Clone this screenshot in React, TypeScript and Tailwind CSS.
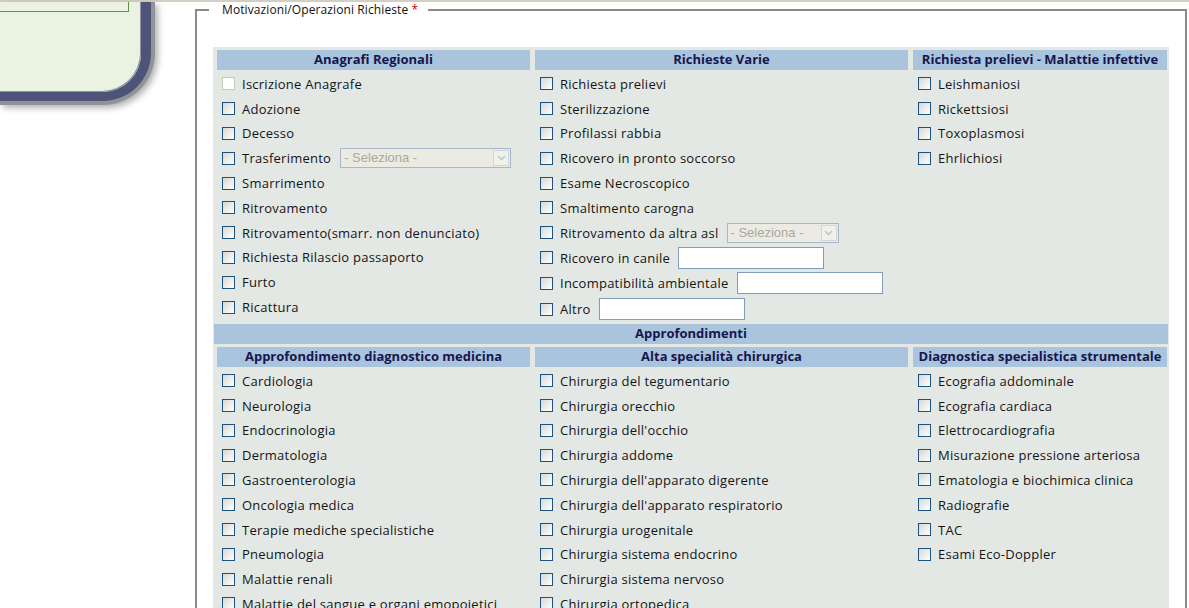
import React from "react";

type Item = { label: string; disabled?: boolean; extra?: "select171" | "select112" | "input" };

const col1: Item[] = [
  { label: "Iscrizione Anagrafe", disabled: true },
  { label: "Adozione" },
  { label: "Decesso" },
  { label: "Trasferimento", extra: "select171" },
  { label: "Smarrimento" },
  { label: "Ritrovamento" },
  { label: "Ritrovamento(smarr. non denunciato)" },
  { label: "Richiesta Rilascio passaporto" },
  { label: "Furto" },
  { label: "Ricattura" },
];

const col2: Item[] = [
  { label: "Richiesta prelievi" },
  { label: "Sterilizzazione" },
  { label: "Profilassi rabbia" },
  { label: "Ricovero in pronto soccorso" },
  { label: "Esame Necroscopico" },
  { label: "Smaltimento carogna" },
  { label: "Ritrovamento da altra asl", extra: "select112" },
  { label: "Ricovero in canile", extra: "input" },
  { label: "Incompatibilità ambientale", extra: "input" },
  { label: "Altro", extra: "input" },
];

const col3: Item[] = [
  { label: "Leishmaniosi" },
  { label: "Rickettsiosi" },
  { label: "Toxoplasmosi" },
  { label: "Ehrlichiosi" },
];

const col4: Item[] = [
  "Cardiologia",
  "Neurologia",
  "Endocrinologia",
  "Dermatologia",
  "Gastroenterologia",
  "Oncologia medica",
  "Terapie mediche specialistiche",
  "Pneumologia",
  "Malattie renali",
  "Malattie del sangue e organi emopoietici",
].map((label) => ({ label }));

const col5: Item[] = [
  "Chirurgia del tegumentario",
  "Chirurgia orecchio",
  "Chirurgia dell'occhio",
  "Chirurgia addome",
  "Chirurgia dell'apparato digerente",
  "Chirurgia dell'apparato respiratorio",
  "Chirurgia urogenitale",
  "Chirurgia sistema endocrino",
  "Chirurgia sistema nervoso",
  "Chirurgia ortopedica",
].map((label) => ({ label }));

const col6: Item[] = [
  "Ecografia addominale",
  "Ecografia cardiaca",
  "Elettrocardiografia",
  "Misurazione pressione arteriosa",
  "Ematologia e biochimica clinica",
  "Radiografie",
  "TAC",
  "Esami Eco-Doppler",
].map((label) => ({ label }));

function CheckBox({ disabled }: { disabled?: boolean }) {
  return disabled ? (
    <span className="block w-[13px] h-[13px] shrink-0 border border-[#cac8bb] bg-white" />
  ) : (
    <span className="block w-[13px] h-[13px] shrink-0 border border-[#1c5180] bg-linear-to-br from-[#d8d8d2] to-white" />
  );
}

function FakeSelect({ wide }: { wide: boolean }) {
  return (
    <span
      className={
        wide
          ? "ml-[9px] flex items-center w-[171px] h-[20px] border border-[#a9b8c8] bg-[#ebebe4]"
          : "ml-[8px] flex items-center w-[112px] h-[20px] border border-[#a9b8c8] bg-[#ebebe4]"
      }
    >
      <span className="flex-1 pl-[3px] text-[13px] leading-[18px] tracking-normal text-[#aca899] font-['Liberation_Sans',Arial,sans-serif]">
        - Seleziona -
      </span>
      <span className="mr-[1px] flex items-center justify-center w-[16px] h-[16px] border border-[#d2d6dc] bg-[#f1f1ec]">
        <svg width="9" height="6" viewBox="0 0 9 6">
          <path d="M1 1 L4.5 4.5 L8 1" fill="none" stroke="#c3c6cc" strokeWidth="1.6" />
        </svg>
      </span>
    </span>
  );
}

function Row({ item }: { item: Item }) {
  const tall = item.extra === "input";
  return (
    <div className={tall ? "flex items-center h-[25.6px] pl-[5px]" : "flex items-center h-[24.8px] pl-[5px]"}>
      <CheckBox disabled={item.disabled} />
      <span className="ml-[7px] text-[13px] leading-[16px] tracking-[0.25px] text-[#141414] whitespace-nowrap">
        {item.label}
      </span>
      {item.extra === "select171" && <FakeSelect wide={true} />}
      {item.extra === "select112" && <FakeSelect wide={false} />}
      {item.extra === "input" && (
        <span className="ml-[8px] block w-[146px] h-[22px] border border-[#7f9db9] bg-white" />
      )}
    </div>
  );
}

function Header({ children }: { children: React.ReactNode }) {
  return (
    <div className="h-[20px] bg-[#a9c4dc] flex items-center justify-center text-[13px] font-bold text-[#16164f] whitespace-nowrap">
      {children}
    </div>
  );
}

function Column({ title, items }: { title: string; items: Item[] }) {
  return (
    <div className="flex flex-col">
      <Header>{title}</Header>
      <div className="flex flex-col pt-[1.5px]">
        {items.map((it) => (
          <Row key={it.label} item={it} />
        ))}
      </div>
    </div>
  );
}

export default function App() {
  return (
    <div className="w-[1189px] h-[608px] overflow-hidden bg-white font-['Open_Sans','Noto_Sans',sans-serif]">
      <div className="h-[2px] bg-[#d3cfc2]" />
      <div className="flex items-start">
        <div className="w-[195px] shrink-0">
          <div className="w-[155px] h-[103px] bg-[#929398] rounded-br-[52px] pr-[4px] pb-[4px] shadow-[3px_3px_6px_rgba(0,0,0,0.3)]">
            <div className="h-full bg-[#4d5478] rounded-br-[48px] pr-[10px] pb-[9px]">
              <div className="h-full bg-[#eaf2e2] rounded-br-[38px] shadow-[inset_-1px_-1px_0_#8e93a8]">
                <div className="w-[129px] h-[10px] border-r border-b border-[#5f8f4f]" />
              </div>
            </div>
          </div>
        </div>
        <fieldset className="w-[992px] h-[700px] border-2 border-[#8a8a8a] pl-[12px] pr-[12px]">
          <legend className="pl-[13px] pr-[10px] text-[12px] leading-[16px] tracking-[0.1px] text-[#111]">
            Motivazioni/Operazioni Richieste <span className="text-[#e00000]">*</span>
          </legend>
          <div className="mt-[29px] ml-[4px] w-[956px] bg-[#e4e8e4] pt-[3px] pb-[3px]">
            <div className="grid grid-cols-[313px_373px_254px] gap-x-[5px] pl-[4px]">
              <Column title="Anagrafi Regionali" items={col1} />
              <Column title="Richieste Varie" items={col2} />
              <Column title="Richiesta prelievi - Malattie infettive" items={col3} />
            </div>
            <div className="mt-[2px] mx-[1px] h-[20px] bg-[#a9c4dc] flex items-center justify-center text-[13px] font-bold text-[#16164f]">
              Approfondimenti
            </div>
            <div className="mt-[3px] grid grid-cols-[313px_373px_254px] gap-x-[5px] pl-[4px]">
              <Column title="Approfondimento diagnostico medicina" items={col4} />
              <Column title="Alta specialità chirurgica" items={col5} />
              <Column title="Diagnostica specialistica strumentale" items={col6} />
            </div>
          </div>
        </fieldset>
      </div>
    </div>
  );
}
